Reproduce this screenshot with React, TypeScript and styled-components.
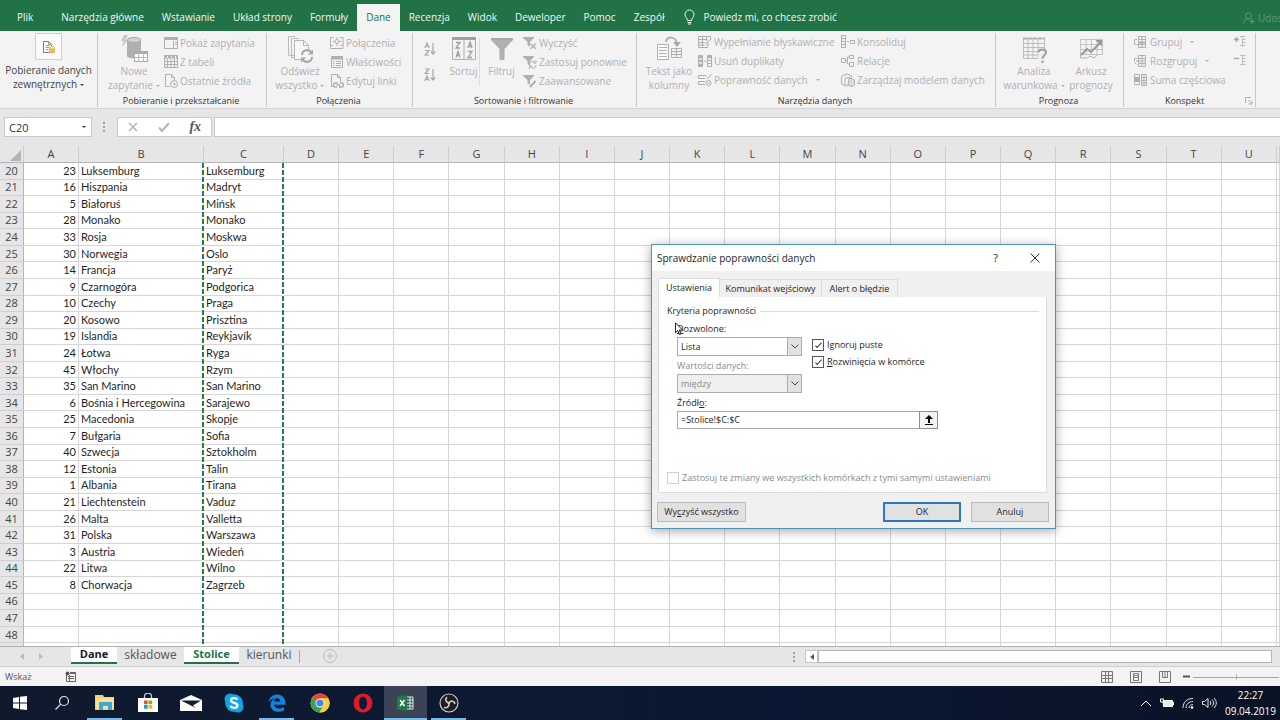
import React from "react";
import styled, { createGlobalStyle, css } from "styled-components";

const UI = `"Open Sans", "Noto Sans", sans-serif`;
const GREEN = "#217346";

const Global = createGlobalStyle`
  *, *::before, *::after { box-sizing: border-box; }
  body { margin: 0; font-family: ${UI}; font-size: 10px; color: #333; background: #e6e6e6; }
  button, input, select { font: inherit; color: inherit; margin: 0; }
  svg { display: block; flex: none; }
`;

const Screen = styled.main`
  position: relative;
  display: flex;
  flex-direction: column;
  height: 100vh;
  overflow: hidden;
`;

/* ---------- Tab strip ---------- */

const TabStrip = styled.nav`
  display: flex;
  align-items: flex-end;
  flex: none;
  height: 31px;
  padding-left: 8px;
  background: ${GREEN};
  overflow: hidden;
`;

const RibbonTab = styled.button<{ $active?: boolean; $first?: boolean }>`
  height: 27px;
  padding: 0 9px 1px;
  margin-right: ${(p) => (p.$first ? "10px" : "0")};
  border: 0;
  font-size: 10px;
  line-height: 24px;
  white-space: nowrap;
  color: ${(p) => (p.$active ? GREEN : "#f2f8f4")};
  background: ${(p) => (p.$active ? "#f3f3f3" : "transparent")};
`;

const TellMe = styled.button`
  display: flex;
  align-items: center;
  gap: 8px;
  height: 27px;
  padding: 0 11px 1px;
  border: 0;
  white-space: nowrap;
  color: #f2f8f4;
  background: transparent;
`;

const Share = styled.button`
  display: flex;
  align-items: center;
  gap: 3px;
  width: 37px;
  height: 27px;
  padding: 0;
  margin-left: auto;
  border: 0;
  overflow: hidden;
  white-space: nowrap;
  color: #5d9a78;
  background: transparent;
`;

/* ---------- Ribbon ---------- */

const Ribbon = styled.div`
  display: flex;
  flex: none;
  height: 78px;
  padding: 2px 0 1px;
  background: #f3f3f3;
  border-bottom: 1px solid #d2d2d2;
  overflow: hidden;
`;

const Group = styled.section<{ $w: number }>`
  display: flex;
  flex-direction: column;
  flex: none;
  width: ${(p) => p.$w}px;
  border-right: 1px solid #c8c8c8;
`;

const GroupBody = styled.div<{ $pad: number }>`
  display: flex;
  align-items: flex-start;
  flex: 1;
  padding-left: ${(p) => p.$pad}px;
`;

const GroupFooter = styled.div`
  display: flex;
  align-items: center;
  padding-right: 2px;
`;

const GroupName = styled.h2`
  flex: 1;
  margin: 0;
  font-size: 9px;
  font-weight: 400;
  line-height: 12px;
  text-align: center;
  color: #333;
`;

const BigCommand = styled.button<{ $w: number; $on?: boolean }>`
  display: flex;
  flex-direction: column;
  align-items: center;
  flex: none;
  gap: ${(p) => (p.$on ? "3px" : "1px")};
  width: ${(p) => p.$w}px;
  padding: ${(p) => (p.$on ? "0" : "2px 0 0")};
  border: 0;
  line-height: 14px;
  white-space: nowrap;
  color: ${(p) => (p.$on ? "#444" : "#b0b0b0")};
  background: transparent;
`;

const IconFrame = styled.span`
  display: grid;
  place-items: center;
  width: 27px;
  height: 27px;
  border: 1px solid #cfcfcf;
  background: #fbfbfb;
`;

const CommandList = styled.div<{ $w?: number; $tight?: boolean }>`
  display: flex;
  flex-direction: column;
  flex: none;
  gap: ${(p) => (p.$tight ? "1px" : "0")};
  width: ${(p) => (p.$w ? p.$w + "px" : "auto")};
  & > button { height: ${(p) => (p.$tight ? "18px" : "19px")}; }
`;

const SmallCommand = styled.button`
  display: flex;
  align-items: center;
  gap: 2px;
  padding: 0;
  border: 0;
  white-space: nowrap;
  color: #b0b0b0;
  background: transparent;
`;

const SortColumn = styled.div`
  display: flex;
  flex-direction: column;
  gap: 12px;
  width: 24px;
  padding-top: 9px;
  color: #a8a8a8;
`;

const BareButton = styled.button`
  display: block;
  padding: 0;
  border: 0;
  color: inherit;
  background: transparent;
`;

const InnerRule = styled.span`
  width: 1px;
  height: 48px;
  margin-top: 5px;
  background: #dcdcdc;
`;

const OutlineColumn = styled.div`
  display: flex;
  flex-direction: column;
  gap: 8px;
  margin-left: auto;
  padding: 3px 9px 0 0;
  color: #a8a8a8;
`;

const CaretMark = styled.span<{ $gap?: number }>`
  display: inline-block;
  width: 0;
  height: 0;
  margin-left: ${(p) => p.$gap ?? 3}px;
  vertical-align: middle;
  border: 2px solid transparent;
  border-top-color: currentColor;
  border-bottom-width: 0;
`;

/* ---------- Formula bar ---------- */

const FormulaBar = styled.div`
  display: flex;
  align-items: center;
  flex: none;
  height: 37px;
  padding: 0 0 1px 4px;
  background: #e6e6e6;
`;

const NameBox = styled.label`
  display: flex;
  align-items: center;
  width: 88px;
  height: 20px;
  padding-right: 5px;
  border: 1px solid #cacaca;
  background: #fff;
`;

const NameInput = styled.input`
  flex: 1;
  min-width: 0;
  padding: 0 4px;
  border: 0;
  outline: 0;
  font-size: 11px;
  background: transparent;
`;

const Grip = styled.span<{ $tight?: boolean }>`
  width: 2px;
  height: 10px;
  margin: ${(p) => (p.$tight ? "0 10px 0 0" : "0 12px 0 11px")};
  background: repeating-linear-gradient(#a0a0a0 0 2px, transparent 2px 4px);
`;

const FormulaTools = styled.div`
  display: flex;
  align-items: center;
  justify-content: space-around;
  width: 95px;
  height: 20px;
  border: 1px solid #cacaca;
  color: #b5b5b5;
  background: #fff;
`;

const Fx = styled(BareButton)`
  font-family: "Liberation Serif", serif;
  font-size: 14px;
  font-style: italic;
  font-weight: 700;
  line-height: 16px;
  color: #555;
`;

const FormulaInput = styled.input`
  flex: 1;
  min-width: 0;
  height: 20px;
  margin-left: 2px;
  border: 1px solid #cacaca;
  border-right: 0;
  outline: 0;
  background: #fff;
`;

/* ---------- Worksheet ---------- */

const SheetArea = styled.div`
  position: relative;
  flex: 1;
  min-height: 0;
  overflow: hidden;
  background: #fff;
`;

const Sheet = styled.table`
  width: 100%;
  height: 514px;
  table-layout: fixed;
  border-collapse: separate;
  border-spacing: 0;
  font-family: Lato, "Noto Sans", sans-serif;
  font-size: 11px;
  line-height: 14px;
  color: #1f1f1f;
`;

const Col = styled.col<{ $w?: number }>`
  width: ${(p) => (p.$w ? p.$w + "px" : "auto")};
`;

const ColHead = styled.th`
  height: 17px;
  padding: 0;
  font-family: ${UI};
  font-size: 11px;
  font-weight: 400;
  line-height: 14px;
  color: #444;
  background: #e6e6e6;
  border-right: 1px solid #cdcdcd;
  border-bottom: 1px solid #b5b5b5;
`;

const RowHead = styled.th`
  padding: 0;
  font-family: ${UI};
  font-size: 11px;
  font-weight: 400;
  color: #444;
  background: #e6e6e6;
  border-right: 1px solid #b5b5b5;
  border-bottom: 1px solid #d0d0d0;
`;

const Cell = styled.td<{ $num?: boolean }>`
  padding: 0 2px;
  overflow: hidden;
  white-space: nowrap;
  text-align: ${(p) => (p.$num ? "right" : "left")};
  border-right: 1px solid #d6d6d6;
  border-bottom: 1px solid #d6d6d6;
`;

const SelectedColumn = styled.div`
  position: absolute;
  top: 17px;
  bottom: 0;
  left: 202px;
  width: 82px;
  pointer-events: none;
  --dash: repeating-linear-gradient(#2c7a50 0 5px, #fff 5px 7px);
  background: var(--dash) left / 2px 100% no-repeat, var(--dash) right / 2px 100% no-repeat;
`;

/* ---------- Sheet tabs and status bar ---------- */

const TabRow = styled.div`
  display: flex;
  align-items: flex-start;
  flex: none;
  height: 21px;
  border-top: 1px solid #b0b0b0;
  border-bottom: 1px solid #d0d0d0;
  background: #e6e6e6;
`;

const NavArrows = styled.div`
  display: flex;
  gap: 15px;
  width: 71px;
  padding: 6px 0 0 20px;
  color: #bdbdbd;
`;

const SheetTab = styled.button<{ $kind?: "group" | "current"; $w: number }>`
  width: ${(p) => p.$w}px;
  height: 17px;
  padding: 0 0 1px;
  border: 0;
  font-size: 12px;
  line-height: 14px;
  color: #555;
  background: transparent;
  ${(p) =>
    p.$kind &&
    css`
      font-size: 11px;
      font-weight: 700;
      color: ${p.$kind === "current" ? GREEN : "#1a1a1a"};
      background: #fff;
      border-bottom: 2px solid ${GREEN};
    `}
`;

const AddSheet = styled(BareButton)`
  margin: 2px 0 0 23px;
`;

const TabDivider = styled.span`
  width: 1px;
  height: 13px;
  margin-top: 3px;
  background: #a8a8a8;
`;

const Scroller = styled.div`
  display: flex;
  align-items: center;
  width: 487px;
  height: 19px;
  margin-left: auto;
`;

const ScrollArrow = styled.button`
  display: grid;
  place-items: center;
  width: 13px;
  height: 13px;
  padding: 0;
  border: 1px solid #c6c6c6;
  color: #555;
  background: #fff;
`;

const ScrollThumb = styled.div`
  flex: 1;
  height: 13px;
  margin-right: 8px;
  border: 1px solid #b5b5b5;
  background: #fff;
`;

const StatusBar = styled.footer`
  display: flex;
  align-items: center;
  flex: none;
  height: 19px;
  padding-left: 5px;
  font-size: 9px;
  color: #555;
  background: #f3f3f3;
`;

const MacroIcon = styled(BareButton)`
  margin-left: 33px;
`;

const Views = styled.div`
  display: flex;
  align-items: center;
  gap: 17px;
  margin-left: auto;
  color: #777;
`;

const Zoom = styled.div`
  display: flex;
  align-items: center;
  gap: 3px;
  width: 97px;
  margin-left: 12px;
`;

/* ---------- Taskbar ---------- */

const Taskbar = styled.div`
  display: flex;
  flex: none;
  height: 34px;
  color: #fff;
  background: linear-gradient(90deg, #0f1a2e, #0b1833 60%, #0a1226);
`;

const TaskButton = styled.button<{ $open?: boolean; $active?: boolean }>`
  display: grid;
  place-items: center;
  width: 43px;
  padding: 0;
  border: 0;
  color: #fff;
  background: ${(p) =>
    p.$active
      ? "linear-gradient(#76b9ed, #76b9ed) bottom / 100% 2px no-repeat #3b4357"
      : p.$open
        ? "linear-gradient(#76b9ed, #76b9ed) bottom / 35px 2px no-repeat"
        : "transparent"};
  &:first-child { width: 40px; }
`;

const Tray = styled.div`
  display: flex;
  align-items: center;
  gap: 8px;
  margin-left: auto;
  padding-right: 4px;
`;

const Clock = styled.time`
  font-size: 10px;
  line-height: 16px;
  text-align: center;
`;

/* ---------- Dialog ---------- */

const Dialog = styled.form`
  position: absolute;
  top: 244px;
  left: 651px;
  display: flex;
  flex-direction: column;
  width: 405px;
  height: 285px;
  font-size: 9px;
  line-height: 12px;
  color: #262626;
  background: #f0f0f0;
  border: 1px solid #4f93bd;
  box-shadow: 0 2px 10px rgba(0, 0, 0, 0.35);
`;

const DialogTitle = styled.header`
  display: flex;
  align-items: center;
  flex: none;
  height: 26px;
  padding: 0 15px 0 5px;
  background: #fff;
`;

const TitleText = styled.h1`
  flex: 1;
  margin: 0;
  font-size: 10px;
  font-weight: 400;
`;

const HelpButton = styled(BareButton)`
  margin-right: 32px;
  font-size: 11px;
`;

const DialogTabs = styled.div`
  display: flex;
  align-items: flex-end;
  height: 26px;
  padding-left: 6px;
`;

const DialogTab = styled.button<{ $active?: boolean; $w: number }>`
  width: ${(p) => p.$w}px;
  height: ${(p) => (p.$active ? 19 : 18)}px;
  padding: 0;
  border: 1px solid #dcdcdc;
  border-bottom: 0;
  border-left-width: ${(p) => (p.$active ? 1 : 0)}px;
  white-space: nowrap;
  background: ${(p) => (p.$active ? "#fff" : "#f0f0f0")};
`;

const Panel = styled.div`
  display: flex;
  flex-direction: column;
  height: 196px;
  margin: 0 8px 0 6px;
  padding: 8px 7px 8px 8px;
  border: 1px solid #dcdcdc;
  border-top: 0;
  background: #fff;
`;

const Fieldset = styled.fieldset`
  min-width: 0;
  margin: 0;
  padding: 0;
  border: 0;
`;

const Legend = styled.legend`
  display: flex;
  align-items: center;
  gap: 4px;
  width: 100%;
  padding: 0;
  &::after { content: ""; flex: 1; height: 1px; background: #dcdcdc; }
`;

const FieldGrid = styled.div`
  display: grid;
  grid-template-columns: 125px 1fr;
  column-gap: 10px;
  padding: 6px 0 0 10px;
`;

const FieldColumn = styled.div`
  display: flex;
  flex-direction: column;
`;

const FieldLabel = styled.label<{ $off?: boolean }>`
  height: 12px;
  margin-bottom: 2px;
  color: ${(p) => (p.$off ? "#8a8a8a" : "inherit")};
`;

const SelectBox = styled.div`
  position: relative;
  height: 19px;
  margin-bottom: 4px;
`;

const Select = styled.select`
  width: 100%;
  height: 19px;
  padding: 0 3px;
  border: 1px solid #adadad;
  border-radius: 0;
  appearance: none;
  background: #fff;
  &:disabled { color: #8a8a8a; background: #efefef; opacity: 1; }
`;

const SelectArrow = styled.span`
  position: absolute;
  top: 0;
  right: 0;
  display: grid;
  place-items: center;
  width: 15px;
  height: 19px;
  border: 1px solid #adadad;
  background: #e1e1e1;
  pointer-events: none;
`;

const Checks = styled.div`
  display: flex;
  flex-direction: column;
  gap: 5px;
  padding-top: 16px;
`;

const CheckLabel = styled.label<{ $off?: boolean }>`
  display: flex;
  align-items: center;
  gap: 3px;
  height: 12px;
  color: ${(p) => (p.$off ? "#8a8a8a" : "inherit")};
`;

const CheckBox = styled.input`
  display: grid;
  place-items: center;
  width: 12px;
  height: 12px;
  border: 1px solid #555;
  appearance: none;
  background: #fff;
  &:checked::after {
    content: "";
    width: 3px;
    height: 7px;
    margin-bottom: 2px;
    border: solid #333;
    border-width: 0 1px 1px 0;
    transform: rotate(42deg);
  }
  &:disabled { border-color: #cfcfcf; }
`;

const SourceRow = styled.div`
  display: flex;
  width: 261px;
  height: 18px;
`;

const SourceInput = styled.input`
  flex: 1;
  min-width: 0;
  padding: 0 3px;
  border: 1px solid #adadad;
  border-right: 0;
  outline: 0;
`;

const PickButton = styled.button`
  display: grid;
  place-items: center;
  width: 19px;
  padding: 0;
  border: 1px solid #8f8f8f;
  background: #f3f3f3;
`;

const ApplyRow = styled.div`
  margin-top: auto;
`;

const Actions = styled.div`
  display: flex;
  gap: 10px;
  margin: 9px 6px 0 5px;
`;

const ActionButton = styled.button<{ $w: number; $primary?: boolean; $lead?: boolean }>`
  width: ${(p) => p.$w}px;
  height: 20px;
  padding: 0;
  margin-right: ${(p) => (p.$lead ? "auto" : "0")};
  border: ${(p) => (p.$primary ? "2px solid #2b78c5" : "1px solid #bcbcbc")};
  background: #e1e1e1;
`;

const Pointer = styled.svg`
  position: absolute;
  top: 322px;
  left: 675px;
  pointer-events: none;
`;

/* ---------- Icons ---------- */

type IconProps = { w?: number; h?: number; vb: string; children: React.ReactNode };
const Icon = ({ w = 14, h = 14, vb, children }: IconProps) => (
  <svg width={w} height={h} viewBox={vb} fill="none" stroke="currentColor" strokeWidth="1" aria-hidden="true">
    {children}
  </svg>
);

const S = "0 0 14 14";
const icons = {
  external: (
    <Icon w={16} h={16} vb="0 0 16 16">
      <path d="M2.500 13.500v-11h5l3 3v8z" stroke="#777" fill="#fff" />
      <path d="M7.500 2.500v3h3M4.500 6.500h4M4.500 8.500h4M4.500 10.500h3" stroke="#999" />
      <path d="M8 8.500c0-2 6-2 6 0v4.500c0 2-6 2-6 0z" fill="#e9b765" stroke="none" />
      <ellipse cx="11" cy="8.500" rx="3" ry="1.200" fill="#f5d9a5" stroke="none" />
    </Icon>
  ),
  newQuery: (
    <Icon w={28} h={28} vb="0 0 28 28">
      <path d="M4 0h4L5.500 5H8L2 12l1.500-6H1z" fill="#c9c9c9" stroke="none" />
      <path d="M7 5v16c0 3 14 3 14 0V5z" fill="#b0b0b0" stroke="none" />
      <ellipse cx="14" cy="5" rx="7" ry="2.500" fill="#d2d2d2" stroke="#a8a8a8" />
      <rect x="14.500" y="16.500" width="13" height="10" fill="#fff" stroke="#aaa" />
      <path d="M14 18h14" stroke="#aaa" strokeWidth="2" />
      <path d="M18.500 17v10M23.500 17v10M14.500 22.500h13" stroke="#bbb" />
    </Icon>
  ),
  refreshAll: (
    <Icon w={28} h={28} vb="0 0 28 28">
      <path d="M9.500 20.500h-7v-19h7M12.500 22.500h-7v-19h7" stroke="#bbb" />
      <path d="M8.500 5.500h9l5 5v14h-14z" fill="#f8f8f8" stroke="#b5b5b5" />
      <path d="M17.500 5.500v5h5" stroke="#b5b5b5" />
      <circle cx="21" cy="21" r="7" fill="#f3f3f3" stroke="none" />
      <path d="M16 20a5 5 0 0 1 9.500-2M26 22a5 5 0 0 1-9.500 2" stroke="#a6a6a6" strokeWidth="2" />
      <path d="M27 14.500v5h-5zM15 27.500v-5h5z" fill="#a6a6a6" stroke="none" />
    </Icon>
  ),
  showQueries: (
    <Icon vb={S}>
      <path d="M.5 1.500h13v11H.5z" />
      <path d="M0 2.500h14" strokeWidth="3" />
      <path d="M9.500 5v8M11 6.500h2M11 8.500h2" />
    </Icon>
  ),
  table: (
    <Icon vb={S}>
      <path d="M.5.5h13v12H.5zM.5 6.500h13M.5 9.500h13M3.500 3v10M7 3v10M10.500 3v10" />
      <path d="M0 2h14" strokeWidth="3" strokeDasharray="3 1" />
    </Icon>
  ),
  recent: (
    <Icon vb={S}>
      <path d="M6 12.500H1.500v-12h6l3 3V6M7.500.5v3h3" />
      <circle cx="10" cy="10" r="3.500" />
      <path d="M10 8v2.500h2" />
    </Icon>
  ),
  connections: (
    <Icon vb={S}>
      <path d="M3 9.500H.5v-8h3M10 1.500h3v8h-2.500M2 12.500h10M.5 9.500v3h2M13 9.500v3h-2" />
      <circle cx="7" cy="5.500" r="2" />
      <path d="M7 1v2.500M7 7.500V10M3 5.500h2M9 5.500h2" />
    </Icon>
  ),
  properties: (
    <Icon vb={S}>
      <path d="M1.500 1.500h11v11h-11zM6 6.500h5M6 8.500h5M6 10.500h5M3 6.500h1.500M3 8.500h1.500M3 10.500h1.500" />
      <path d="M1 3h12" strokeWidth="3" />
    </Icon>
  ),
  links: (
    <Icon vb={S}>
      <path d="M3 12.500H1.500v-12h6l3 3V8M7.500.5v3h3" />
      <path d="M7 13H5.500a2 2 0 0 1 0-4H8M10 9h1.500a2 2 0 0 1 0 4H9M6.500 11h4" strokeWidth="1.500" />
    </Icon>
  ),
  sort: (
    <Icon w={26} h={28} vb="0 -2 26 28">
      <path d="M1.500 1.500h23v21h-23zM13 3v20" />
      <path d="M1 1.500h24" strokeWidth="3" stroke="#a0a0a0" />
      <path d="M5 5.500h4L5 11h4M5 20.500l2-6 2 6M5.800 18.500h2.500M17 11l2-6 2 6M17.800 9.500h2.500M17 14.500h4l-4 6h4" strokeWidth="1.300" stroke="#a0a0a0" />
    </Icon>
  ),
  sortAsc: (
    <Icon w={12} h={14} vb="0 0 12 14">
      <path d="M.8 6l2.200-5 2.200 5M1.500 4.500h3M1 8.500h4L1 13h4M9 1v11M6.800 9.500L9 12l2.200-2.500" strokeWidth="1.200" />
    </Icon>
  ),
  sortDesc: (
    <Icon w={12} h={14} vb="0 0 12 14">
      <path d="M1 1h4L1 5.500h4M.8 13L3 8l2.200 5M1.500 11.500h3M9 1v11M6.800 9.500L9 12l2.200-2.500" strokeWidth="1.200" />
    </Icon>
  ),
  filter: (
    <Icon w={24} h={28} vb="0 -2 24 28">
      <path d="M1 1h22v2l-8.500 9v11h-5V12L1 3z" fill="#b0b0b0" stroke="none" />
      <path d="M1 2h22" stroke="#9f9f9f" />
    </Icon>
  ),
  clear: (
    <Icon vb={S}>
      <path d="M0 1h11v1L7 6v5L4.500 9V6L0 2z" fill="currentColor" stroke="none" />
      <path d="M7.500 7.500l5.500 5.500M13 7.500L7.500 13" strokeWidth="1.300" />
    </Icon>
  ),
  reapply: (
    <Icon vb={S}>
      <path d="M0 1h11v1L7 6v5L4.500 9V6L0 2z" fill="currentColor" stroke="none" />
      <path d="M6.500 9a3 3 0 0 1 5.500-1.500M13 10a3 3 0 0 1-5.500 1.800M13 5v3h-3M6.500 14v-3h3" />
    </Icon>
  ),
  advanced: (
    <Icon vb={S}>
      <path d="M0 1h11v1L7 6v5L4.500 9V6L0 2z" fill="currentColor" stroke="none" />
      <path d="M7 13l5.500-6" strokeWidth="2" />
    </Icon>
  ),
  textColumns: (
    <Icon w={28} h={28} vb="0 0 28 28">
      <path d="M2.500 9.500h11v15h-11z" fill="#fafafa" />
      <path d="M4 12.500h8M4 15.500h8M4 18.500h8M4 21.500h8" />
      <path d="M16.500 13.500h10v9h-10zM21.500 13.500v9M16.500 16.500h10M16.500 19.500h10" />
      <path d="M11 7c1-6 9-6 11 1" strokeWidth="2" />
      <path d="M18 7h8l-4 5z" fill="#a9a9a9" stroke="none" />
    </Icon>
  ),
  flashFill: (
    <Icon vb={S}>
      <path d="M10 12.500H.5v-11h12V5M.5 4.500h9M.5 7.500h7M.5 10h6M4.500 2v10M8.500 2v4M12.500 4L8 9h3l-3 4" />
    </Icon>
  ),
  duplicates: (
    <Icon vb={S}>
      <path d="M.5 1.500h4v11h-4zM9.500 1.500h4v11h-4z" />
      <path d="M0 3h5M0 7h5M0 11h5M9 3h5" strokeWidth="2.500" />
      <path d="M5.500 7h3M9.500 6.500h4M9.500 9.500h4" />
    </Icon>
  ),
  validation: (
    <Icon vb={S}>
      <path d="M7 5.500H.5v-3H8M7 11.500H.5v-3H7M8 3.500l2 2 3.500-4.500" />
      <circle cx="10.500" cy="10" r="2.500" />
      <path d="M9 11.500l3-3" />
    </Icon>
  ),
  consolidate: (
    <Icon vb={S}>
      <path d="M.5.5h4v12h-4zM.5 3.500h4M.5 6.500h4M.5 9.500h4M9.500 5.500h4v3h-4z" />
      <path d="M6 6.500h2M9 5.500h5" />
    </Icon>
  ),
  relations: (
    <Icon vb={S}>
      <path d="M.5 4.500h4v4h-4zM8.500 1.500h4v3h-4zM8.500 8.500h4v4h-4zM4.500 6.500h2M8.500 3h-2v7h2" />
    </Icon>
  ),
  model: (
    <Icon vb={S}>
      <path d="M.5 3.500l5-2.500 5 1.500v9l-5 1.500-5-2zM4 5.500v7M4 5.500l5-1.500" />
      <path d="M8 5.500h3l2.500 1.500v5L11 13.500 7 12z" fill="#dcdcdc" />
    </Icon>
  ),
  whatIf: (
    <Icon w={28} h={28} vb="0 0 28 28">
      <path d="M3.500 3.500h21v20h-21zM3.500 8.500h21M3.500 12.500h21M3.500 16.500h21M3.500 20h21M8 4v20M13 4v20M18 4v20" stroke="#bdbdbd" />
      <path d="M3 3.500h22" strokeWidth="2" strokeDasharray="4 1" />
      <path d="M18 15h9v13h-9z" fill="#f3f3f3" fillOpacity=".7" stroke="none" />
      <path d="M18.500 17.500c0-4 7.500-4 7.500 0 0 3-3.500 2.500-3.500 6M22.500 25.500V28" stroke="#9d9d9d" strokeWidth="2" />
    </Icon>
  ),
  forecast: (
    <Icon w={28} h={28} vb="0 0 28 28">
      <path d="M3.500 4.500h22v15h-22zM3.500 9.500h22M3.500 14.500h22M9 5v15M14.500 5v15M20 5v15" stroke="#c2c2c2" />
      <path d="M3.500 19.500v3.500h7l2-2 5 2 3-3.500" />
      <path d="M4 20l6-6 4 3 10-10" stroke="#999" strokeWidth="2" />
      <path d="M18.500 5H25v6.500z" fill="#999" stroke="none" />
    </Icon>
  ),
  group: (
    <Icon vb={S}>
      <path d="M4.500 1.500h7v11h-7zM4.500 4.500h7M4.500 9.500h7M8 1.500v11M.5 4.500v5h3M1 4.500h2" />
      <path d="M5 6.500h7v2H5z" fill="currentColor" stroke="none" />
    </Icon>
  ),
  ungroup: (
    <Icon vb={S}>
      <path d="M4.500 1.500h7v11h-7zM4.500 4.500h7M4.500 9.500h7M8 1.500v11M.5 7.500v-3h3M.5 8.500l2 2" />
      <path d="M2 6.500h9v1H2z" fill="currentColor" stroke="none" />
    </Icon>
  ),
  subtotal: (
    <Icon vb={S}>
      <path d="M.5 1.500h5v10h-5zM7.500 1.500h5v11h-5zM.5 4.500h5M.5 8.500h5M7.500 4.500h5M7.500 7.500h5M7.500 10h5M10 2v10" />
      <path d="M1 5h4v3H1z" fill="currentColor" stroke="none" />
    </Icon>
  ),
  showDetail: (
    <Icon w={12} h={11} vb="0 0 12 11">
      <path d="M0 3.500h5M2.500 1v5" strokeWidth="1.500" />
      <path d="M6 .5h5.500M8 3.500h3.500M8 6.500h3.500M6 9.500h5.500M8.500 1v9" stroke="#bdbdbd" />
    </Icon>
  ),
  hideDetail: (
    <Icon w={12} h={11} vb="0 0 12 11">
      <path d="M0 3.500h5" strokeWidth="1.500" />
      <path d="M6 .5h5.500M8 3.500h3.500M8 6.500h3.500M6 9.500h5.500M8.500 1v9" stroke="#bdbdbd" />
    </Icon>
  ),
};

const Big = ({ icon, lines, w, caret, on }: { icon: React.ReactNode; lines: string[]; w: number; caret?: boolean; on?: boolean }) => (
  <BigCommand $w={w} $on={on}>
    {icon}
    <span>
      {lines.map((t, i) => (
        <React.Fragment key={t}>
          {i > 0 && <br />}
          {t}
        </React.Fragment>
      ))}
      {caret && <CaretMark />}
    </span>
  </BigCommand>
);

const Small = ({ icon, text, caret }: { icon: React.ReactNode; text: string; caret?: boolean }) => (
  <SmallCommand>
    {icon}
    <span>{text}</span>
    {caret && <CaretMark $gap={6} />}
  </SmallCommand>
);

const Footer = ({ name, children }: { name: string; children?: React.ReactNode }) => (
  <GroupFooter>
    <GroupName>{name}</GroupName>
    {children}
  </GroupFooter>
);

/* ---------- Data ---------- */

const rows: [number, string, string][] = [
  [23, "Luksemburg", "Luksemburg"],
  [16, "Hiszpania", "Madryt"],
  [5, "Białoruś", "Mińsk"],
  [28, "Monako", "Monako"],
  [33, "Rosja", "Moskwa"],
  [30, "Norwegia", "Oslo"],
  [14, "Francja", "Paryż"],
  [9, "Czarnogóra", "Podgorica"],
  [10, "Czechy", "Praga"],
  [20, "Kosowo", "Prisztina"],
  [19, "Islandia", "Reykjavík"],
  [24, "Łotwa", "Ryga"],
  [45, "Włochy", "Rzym"],
  [35, "San Marino", "San Marino"],
  [6, "Bośnia i Hercegowina", "Sarajewo"],
  [25, "Macedonia", "Skopje"],
  [7, "Bułgaria", "Sofia"],
  [40, "Szwecja", "Sztokholm"],
  [12, "Estonia", "Talin"],
  [1, "Albania", "Tirana"],
  [21, "Liechtenstein", "Vaduz"],
  [26, "Malta", "Valletta"],
  [31, "Polska", "Warszawa"],
  [3, "Austria", "Wiedeń"],
  [22, "Litwa", "Wilno"],
  [8, "Chorwacja", "Zagrzeb"],
];
const FIRST_ROW = 20;
const ROW_COUNT = 30;
const letters = "ABCDEFGHIJKLMNOPQRSTU".split("");
const tabs = ["Plik", "Narzędzia główne", "Wstawianie", "Układ strony", "Formuły", "Dane", "Recenzja", "Widok", "Deweloper", "Pomoc", "Zespół"];

const Worksheet = () => (
  <SheetArea>
    <Sheet>
      <colgroup>
        <Col $w={24} />
        <Col $w={55} />
        <Col $w={125} />
        <Col $w={80} />
        {letters.slice(3).map((l) => (
          <Col key={l} />
        ))}
        <Col $w={3} />
      </colgroup>
      <thead>
        <tr>
          <ColHead>
            <svg width="23" height="15" viewBox="0 0 23 15" aria-hidden="true">
              <path d="M21 3v11H10z" fill="#b4b4b4" />
            </svg>
          </ColHead>
          {letters.map((l) => (
            <ColHead key={l} scope="col">{l}</ColHead>
          ))}
          <ColHead />
        </tr>
      </thead>
      <tbody>
        {Array.from({ length: ROW_COUNT }, (_, i) => (
          <tr key={i}>
            <RowHead scope="row">{i < ROW_COUNT - 1 ? FIRST_ROW + i : "\u00a0"}</RowHead>
            <Cell $num>{rows[i]?.[0]}</Cell>
            <Cell>{rows[i]?.[1]}</Cell>
            <Cell>{rows[i]?.[2]}</Cell>
            {letters.slice(3).map((l) => (
              <Cell key={l} />
            ))}
            <Cell />
          </tr>
        ))}
      </tbody>
    </Sheet>
    <SelectedColumn />
  </SheetArea>
);

const RibbonPanel = () => (
  <Ribbon>
    <Group $w={98}>
      <GroupBody $pad={0}>
        <Big on w={97} icon={<IconFrame>{icons.external}</IconFrame>} lines={["Pobieranie danych", "zewnętrznych"]} caret />
      </GroupBody>
    </Group>
    <Group $w={169}>
      <GroupBody $pad={6}>
        <Big w={60} icon={icons.newQuery} lines={["Nowe", "zapytanie"]} caret />
        <CommandList>
          <Small icon={icons.showQueries} text="Pokaż zapytania" />
          <Small icon={icons.table} text="Z tabeli" />
          <Small icon={icons.recent} text="Ostatnie źródła" />
        </CommandList>
      </GroupBody>
      <Footer name="Pobieranie i przekształcanie" />
    </Group>
    <Group $w={146}>
      <GroupBody $pad={3}>
        <Big w={60} icon={icons.refreshAll} lines={["Odśwież", "wszystko"]} caret />
        <CommandList>
          <Small icon={icons.connections} text="Połączenia" />
          <Small icon={icons.properties} text="Właściwości" />
          <Small icon={icons.links} text="Edytuj linki" />
        </CommandList>
      </GroupBody>
      <Footer name="Połączenia" />
    </Group>
    <Group $w={224}>
      <GroupBody $pad={11}>
        <SortColumn>
          <BareButton aria-label="Sortuj od A do Z">{icons.sortAsc}</BareButton>
          <BareButton aria-label="Sortuj od Z do A">{icons.sortDesc}</BareButton>
        </SortColumn>
        <Big w={31} icon={icons.sort} lines={["Sortuj"]} />
        <InnerRule />
        <Big w={43} icon={icons.filter} lines={["Filtruj"]} />
        <CommandList>
          <Small icon={icons.clear} text="Wyczyść" />
          <Small icon={icons.reapply} text="Zastosuj ponownie" />
          <Small icon={icons.advanced} text="Zaawansowane" />
        </CommandList>
      </GroupBody>
      <Footer name="Sortowanie i filtrowanie" />
    </Group>
    <Group $w={359}>
      <GroupBody $pad={3}>
        <Big w={58} icon={icons.textColumns} lines={["Tekst jako", "kolumny"]} />
        <CommandList $w={143} $tight>
          <Small icon={icons.flashFill} text="Wypełnianie błyskawiczne" />
          <Small icon={icons.duplicates} text="Usuń duplikaty" />
          <Small icon={icons.validation} text="Poprawność danych" caret />
        </CommandList>
        <CommandList $tight>
          <Small icon={icons.consolidate} text="Konsoliduj" />
          <Small icon={icons.relations} text="Relacje" />
          <Small icon={icons.model} text="Zarządzaj modelem danych" />
        </CommandList>
      </GroupBody>
      <Footer name="Narzędzia danych" />
    </Group>
    <Group $w={128}>
      <GroupBody $pad={8}>
        <Big w={60} icon={icons.whatIf} lines={["Analiza", "warunkowa"]} caret />
        <Big w={54} icon={icons.forecast} lines={["Arkusz", "prognozy"]} />
      </GroupBody>
      <Footer name="Prognoza" />
    </Group>
    <Group $w={132}>
      <GroupBody $pad={10}>
        <CommandList $tight>
          <Small icon={icons.group} text="Grupuj" caret />
          <Small icon={icons.ungroup} text="Rozgrupuj" caret />
          <Small icon={icons.subtotal} text="Suma częściowa" />
        </CommandList>
        <OutlineColumn>
          <BareButton aria-label="Pokaż szczegóły">{icons.showDetail}</BareButton>
          <BareButton aria-label="Ukryj szczegóły">{icons.hideDetail}</BareButton>
        </OutlineColumn>
      </GroupBody>
      <Footer name="Konspekt">
        <BareButton aria-label="Opcje konspektu">
          <svg width="8" height="8" viewBox="0 0 8 8" fill="none" stroke="#b0b0b0" aria-hidden="true">
            <path d="M.5 6V.5H6M3 3l4 4M7 3.500V7H3.500" />
          </svg>
        </BareButton>
      </Footer>
    </Group>
  </Ribbon>
);

const DownArrow = () => (
  <SelectArrow>
    <svg width="8" height="5" viewBox="0 0 8 5" fill="none" stroke="#444" aria-hidden="true">
      <path d="M.5.5L4 4 7.500.5" />
    </svg>
  </SelectArrow>
);

const ValidationDialog = () => (
  <Dialog onSubmit={(e) => e.preventDefault()}>
    <DialogTitle>
      <TitleText>Sprawdzanie poprawności danych</TitleText>
      <HelpButton type="button">?</HelpButton>
      <BareButton type="button" aria-label="Zamknij">
        <svg width="10" height="10" viewBox="0 0 10 10" stroke="#333" aria-hidden="true">
          <path d="M.5.5l9 9M9.500.5l-9 9" />
        </svg>
      </BareButton>
    </DialogTitle>
    <DialogTabs>
      <DialogTab type="button" $active $w={62}>Ustawienia</DialogTab>
      <DialogTab type="button" $w={102}>Komunikat wejściowy</DialogTab>
      <DialogTab type="button" $w={76}>Alert o błędzie</DialogTab>
    </DialogTabs>
    <Panel>
      <Fieldset>
        <Legend>Kryteria poprawności</Legend>
        <FieldGrid>
          <FieldColumn>
            <FieldLabel htmlFor="allow"><u>D</u>ozwolone:</FieldLabel>
            <SelectBox>
              <Select id="allow"><option>Lista</option></Select>
              <DownArrow />
            </SelectBox>
            <FieldLabel htmlFor="data" $off>Wartości danych:</FieldLabel>
            <SelectBox>
              <Select id="data" disabled><option>między</option></Select>
              <DownArrow />
            </SelectBox>
            <FieldLabel htmlFor="source">Źródł<u>o</u>:</FieldLabel>
            <SourceRow>
              <SourceInput id="source" defaultValue="=Stolice!$C:$C" />
              <PickButton type="button" aria-label="Wskaż zakres">
                <svg width="8" height="10" viewBox="0 0 8 10" aria-hidden="true"><path d="M4 0l4 4H5v4H3V4H0zM0 9h8v1H0z" /></svg>
              </PickButton>
            </SourceRow>
          </FieldColumn>
          <Checks>
            <CheckLabel><CheckBox type="checkbox" defaultChecked /><span>Ignoru<u>j</u> puste</span></CheckLabel>
            <CheckLabel><CheckBox type="checkbox" defaultChecked /><span><u>R</u>ozwinięcia w komórce</span></CheckLabel>
          </Checks>
        </FieldGrid>
      </Fieldset>
      <ApplyRow>
        <CheckLabel $off><CheckBox type="checkbox" disabled /><span>Zastosuj te zmiany we wszystkich komórkach z tymi samymi ustawieniami</span></CheckLabel>
      </ApplyRow>
    </Panel>
    <Actions>
      <ActionButton type="button" $w={89} $lead>Wy<u>c</u>zyść wszystko</ActionButton>
      <ActionButton type="submit" $w={78} $primary>OK</ActionButton>
      <ActionButton type="button" $w={78}>Anuluj</ActionButton>
    </Actions>
  </Dialog>
);

const taskIcons: { name: string; open?: boolean; active?: boolean; art: React.ReactNode }[] = [
  { name: "Start", art: <svg width="16" height="16" viewBox="0 0 16 16" fill="#fff"><path d="M1 3l6-1v5.500H1zM8 1.800L15 1v6.500H8zM1 8.500h6V14l-6-1zM8 8.500h7V15l-7-.8z" /></svg> },
  { name: "Szukaj", art: <svg width="16" height="16" viewBox="0 0 16 16" fill="none" stroke="#e8e8e8" strokeWidth="1.200"><circle cx="10" cy="6" r="4.500" /><path d="M6.800 9.200L1.500 14.500" /></svg> },
  { name: "Eksplorator", open: true, art: <svg width="20" height="18" viewBox="0 0 20 18"><path d="M0 1h8l1 2h10v13H0z" fill="#f3cf6d" /><path d="M1 4h18v11H1z" fill="#fbe08d" /><path d="M4 8h13v8h-4v-4H8v4H4z" fill="#3fa9dc" /></svg> },
  { name: "Sklep", art: <svg width="20" height="20" viewBox="0 0 20 20"><path d="M6.500 6V3.500a3.500 3.500 0 0 1 7 0V6" fill="none" stroke="#c8ccd2" strokeWidth="1.300" /><path d="M0 5h20v14H0z" fill="#fff" /><path d="M6 7.500h3.700v3.700H6z" fill="#f25022" /><path d="M10.500 7.500h3.700v3.700h-3.700z" fill="#7fba00" /><path d="M6 12h3.700v3.700H6z" fill="#00a4ef" /><path d="M10.500 12h3.700v3.700h-3.700z" fill="#ffb900" /></svg> },
  { name: "Poczta", art: <svg width="22" height="18" viewBox="0 0 22 18"><path d="M0 6l11-5 11 5v11H0z" fill="#fff" /><path d="M1 6.500h20l-8 5 3 2.500z" fill="#111c33" /></svg> },
  { name: "Skype", art: <svg width="20" height="20" viewBox="0 0 20 20"><circle cx="6" cy="6" r="5.500" fill="#0f9fe0" /><circle cx="14" cy="14" r="5.500" fill="#0f9fe0" /><circle cx="10" cy="10" r="8.800" fill="#12a5e8" /><path d="M13.500 6.500C12 4.600 7 4.600 7 7.400c0 3 6.500 2 6.500 5 0 3-5.500 3-7.300.6" fill="none" stroke="#fff" strokeWidth="2.200" /></svg> },
  { name: "Edge", open: true, art: <svg width="18" height="18" viewBox="0 0 18 18"><path d="M.5 8.500C1 3.500 4.500.5 9.300.5c5 0 8.200 3.700 8.200 8.200v2H6.200c.2 4.200 6 4.800 9.800 2.300V16.500c-6 3-13.500.8-13.500-5.500C2.500 7.500 4.500 5.300 7 4 4.500 4.200 1.800 6 .5 8.500zM6.300 7.500h5.900c0-4.500-5.700-4.300-5.900 0z" fill="#1583dc" /></svg> },
  { name: "Chrome", art: <svg width="20" height="20" viewBox="0 0 20 20"><circle cx="10" cy="10" r="9.500" fill="#f9cf3b" /><path d="M10 10L1.800 5.200A9.500 9.500 0 0 1 18.500 5.500H10z" fill="#e1483b" /><path d="M1.800 5.200a9.500 9.500 0 0 0 7.700 14.300L13.500 12z" fill="#35a355" /><path d="M10 5.500h8.500a9.500 9.500 0 0 1-9 14l4.500-7z" fill="#f9cf3b" /><circle cx="10" cy="10" r="4.500" fill="#fff" /><circle cx="10" cy="10" r="3.600" fill="#4a80e8" /></svg> },
  { name: "Opera", art: <svg width="20" height="20" viewBox="0 0 20 20"><path fillRule="evenodd" d="M10 .5a9.500 9.500 0 1 0 0 19 9.500 9.500 0 0 0 0-19zm0 3c2.500 0 4 3 4 6.500s-1.500 6.500-4 6.500S6 13.500 6 10s1.500-6.500 4-6.500z" fill="#e3182b" /></svg> },
  { name: "Excel", active: true, art: <svg width="18" height="16" viewBox="0 0 18 16"><path d="M9 2h7v12H9z" fill="none" stroke="#d9efe2" /><path d="M10 5h6M10 8h6M10 11h6M13 2v12" stroke="#d9efe2" /><path d="M0 1.500L10 0v16L0 14.500z" fill="#1f7a48" /><path d="M3 5l4.500 6M7.500 5L3 11" stroke="#fff" strokeWidth="1.500" /></svg> },
  { name: "OBS", open: true, art: <svg width="20" height="20" viewBox="0 0 20 20" fill="none"><circle cx="10" cy="10" r="9" fill="#1e1e22" stroke="#c9c9cb" strokeWidth="1.200" /><path d="M10 10C6.500 9.500 6 6 8 4M10 10c2-3 5.500-2 6 1M10 10c.5 3.500-2 5.500-5 4.500" stroke="#c9c9cb" strokeWidth="1.600" /><circle cx="10" cy="10" r="1.200" fill="#c9c9cb" /></svg> },
];

export default function App() {
  return (
    <Screen>
      <Global />
      <TabStrip>
        {tabs.map((t, i) => (
          <RibbonTab key={t} $active={t === "Dane"} $first={i === 0}>{t}</RibbonTab>
        ))}
        <TellMe>
          <svg width="11" height="16" viewBox="0 0 11 16" fill="none" stroke="currentColor" aria-hidden="true">
            <path d="M3.500 11.500c0-2.500-2.500-3-2.500-6a4.500 4.500 0 0 1 9 0c0 3-2.500 3.500-2.500 6zM3.500 13.500h4M4 15h3" />
          </svg>
          Powiedz mi, co chcesz zrobić
        </TellMe>
        <Share>
          <svg width="12" height="12" viewBox="0 0 12 12" fill="none" stroke="currentColor" aria-hidden="true">
            <circle cx="5.500" cy="4" r="3" />
            <path d="M.5 11.500c0-3 2-4.500 4-4.500h1M9 7v5M6.500 9.500h5" />
          </svg>
          Udostępnij
        </Share>
      </TabStrip>
      <RibbonPanel />
      <FormulaBar>
        <NameBox>
          <NameInput aria-label="Pole nazwy" defaultValue="C20" />
          <CaretMark />
        </NameBox>
        <Grip />
        <FormulaTools>
          <BareButton aria-label="Anuluj wpis">
            <svg width="10" height="10" viewBox="0 0 10 10" stroke="currentColor" strokeWidth="1.500"><path d="M1 1l8 8M9 1L1 9" /></svg>
          </BareButton>
          <BareButton aria-label="Zatwierdź wpis">
            <svg width="12" height="10" viewBox="0 0 12 10" fill="none" stroke="currentColor" strokeWidth="2"><path d="M1 5.500L4 9l7-8" /></svg>
          </BareButton>
          <Fx aria-label="Wstaw funkcję">fx</Fx>
        </FormulaTools>
        <FormulaInput aria-label="Pasek formuły" />
      </FormulaBar>
      <Worksheet />
      <TabRow>
        <NavArrows>
          <svg width="4" height="7" viewBox="0 0 4 7" fill="currentColor"><path d="M4 0v7L0 3.500z" /></svg>
          <svg width="4" height="7" viewBox="0 0 4 7" fill="currentColor"><path d="M0 0v7l4-3.500z" /></svg>
        </NavArrows>
        <SheetTab $kind="group" $w={46}>Dane</SheetTab>
        <SheetTab $w={67}>składowe</SheetTab>
        <SheetTab $kind="current" $w={55}>Stolice</SheetTab>
        <SheetTab $w={60}>kierunki</SheetTab>
        <TabDivider />
        <AddSheet aria-label="Nowy arkusz">
          <svg width="14" height="14" viewBox="0 0 14 14" fill="none" stroke="#bdbdbd"><circle cx="7" cy="7" r="6.500" /><path d="M7 3.500v7M3.500 7h7" /></svg>
        </AddSheet>
        <Scroller>
          <Grip $tight />
          <ScrollArrow aria-label="Przewiń w lewo">
            <svg width="4" height="6" viewBox="0 0 4 6" fill="currentColor"><path d="M4 0v6L0 3z" /></svg>
          </ScrollArrow>
          <ScrollThumb />
        </Scroller>
      </TabRow>
      <StatusBar>
        Wskaż
        <MacroIcon aria-label="Nagraj makro">
          <svg width="11" height="11" viewBox="0 0 11 11" fill="none" stroke="#666"><path d="M1.500 4v6.500h9V2.500H5M3 5.500h6M3 7.500h6M4.500 4v6" /><circle cx="2.500" cy="2.500" r="2" fill="#555" stroke="none" /><path d="M5 2h6" strokeWidth="2" /></svg>
        </MacroIcon>
        <Views>
          <BareButton aria-label="Normalny"><svg width="12" height="12" viewBox="0 0 12 12" fill="none" stroke="currentColor"><path d="M.5.5h11v11H.5zM.5 4.500h11M.5 7.500h11M4.500.5v11M7.500.5v11" /></svg></BareButton>
          <BareButton aria-label="Układ strony"><svg width="12" height="12" viewBox="0 0 12 12" fill="none" stroke="currentColor"><path d="M.5.5h11v11H.5zM3.500 2.500h5v7h-5zM4 4.500h4M4 6.500h4" /></svg></BareButton>
          <BareButton aria-label="Podział stron"><svg width="12" height="12" viewBox="0 0 12 12" fill="none" stroke="currentColor"><path d="M.5.5h11v11H.5zM3.500.5v6h5v-6M6 .5v6" /></svg></BareButton>
        </Views>
        <Zoom>
          <svg width="7" height="3" viewBox="0 0 7 3"><path d="M0 1.500h7" stroke="#555" strokeWidth="2" /></svg>
          <svg width="86" height="6" viewBox="0 0 86 6" stroke="#a8a8a8"><path d="M0 3.500h86M43.500.5v5" /></svg>
        </Zoom>
      </StatusBar>
      <Taskbar>
        {taskIcons.map((t) => (
          <TaskButton key={t.name} aria-label={t.name} $open={t.open} $active={t.active}>{t.art}</TaskButton>
        ))}
        <Tray>
          <svg width="12" height="8" viewBox="0 0 12 8" fill="none" stroke="#fff"><path d="M1 7l5-5 5 5" /></svg>
          <svg width="14" height="10" viewBox="0 0 14 10" fill="none" stroke="#fff"><path d="M3 2.500h9.500v6h-9z" fill="#e8e8e8" /><path d="M13.500 4v3M.5 1h3v3h-3z" /></svg>
          <svg width="12" height="12" viewBox="0 0 12 12" fill="none" stroke="#e0e0e0"><path d="M1 11C1 5 5 1.500 11 1.500M4 11c0-4 3-6.500 7-6.500M7 11c0-2 1.500-3.500 4-3.500" /><circle cx="10" cy="10.500" r="1" fill="#fff" /></svg>
          <svg width="15" height="12" viewBox="0 0 15 12" fill="none" stroke="#e8e8e8"><path d="M.5 4.500h2L6 1.500v9l-3.500-3h-2zM8 4c1 1 1 3 0 4M10 2.500c2 2 2 5 0 7M12 1c3 3 3 7 0 10" /></svg>
          <Clock>22:27<br />09.04.2019</Clock>
        </Tray>
      </Taskbar>
      <ValidationDialog />
      <Pointer width="9" height="14" viewBox="0 0 9 14" fill="#fff" stroke="#222">
        <path d="M.5.8v10l2.300-2.200 1.700 4 1.500-.7-1.700-3.800h3.300z" />
      </Pointer>
    </Screen>
  );
}
